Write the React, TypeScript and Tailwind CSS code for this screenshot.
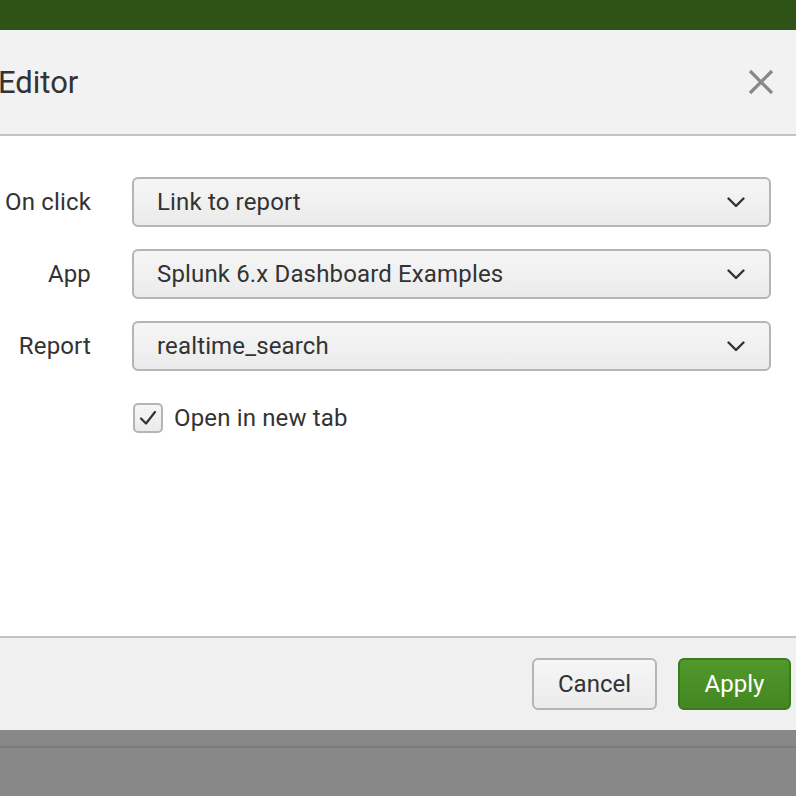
import React from 'react';

type Field = { label: string; value: string };

const fields: Field[] = [
  { label: 'On click', value: 'Link to report' },
  { label: 'App', value: 'Splunk 6.x Dashboard Examples' },
  { label: 'Report', value: 'realtime_search' },
];

function Chevron() {
  return (
    <svg width="18" height="11" viewBox="0 0 18 11" fill="none">
      <path d="M1.5 1.5 L9 9 L16.5 1.5" stroke="#333" strokeWidth="2.4" strokeLinecap="round" strokeLinejoin="round" />
    </svg>
  );
}

function SelectBox({ value }: { value: string }) {
  return (
    <div className="flex h-[50px] flex-1 items-center justify-between rounded-[6px] border-2 border-[#b5b5b5] bg-gradient-to-b from-[#f6f6f6] to-[#ebebeb] pl-[23px] pr-[24px]">
      <span className="text-[24px] tracking-[0.15px] text-[#333]">{value}</span>
      <Chevron />
    </div>
  );
}

export default function App() {
  return (
    <div className="flex h-[796px] w-[796px] flex-col overflow-hidden bg-[#888] font-['Roboto',sans-serif]">
      <div className="h-[30px] shrink-0 bg-[#2f5217]" />

      {/* header */}
      <div className="flex h-[106px] shrink-0 items-center justify-between border-b-2 border-[#c3c3c3] bg-[#f2f2f2] pr-[22px]">
        <h1 className="-ml-[2px] text-[31px] leading-none text-[#333]">Editor</h1>
        <svg width="26" height="26" viewBox="0 0 26 26">
          <path d="M2 2 L24 24 M24 2 L2 24" stroke="#888" strokeWidth="3.2" />
        </svg>
      </div>

      {/* body */}
      <div className="flex h-[502px] shrink-0 flex-col gap-[22px] border-b-2 border-[#c3c3c3] bg-white pr-[25px] pt-[41px]">
        {fields.map((f) => (
          <div key={f.label} className="flex items-center gap-[41px]">
            <label className="w-[91px] shrink-0 text-right text-[24px] tracking-[0.15px] text-[#333]">{f.label}</label>
            <SelectBox value={f.value} />
          </div>
        ))}
        <div className="flex items-center gap-[11px] pl-[133px] pt-[7px]">
          <div className="flex h-[30px] w-[30px] items-center justify-center rounded-[5px] border-2 border-[#b5b5b5] bg-gradient-to-b from-[#f6f6f6] to-[#ebebeb]">
            <svg width="18" height="16" viewBox="0 0 18 16" fill="none">
              <path d="M2 8.5 L7 13.5 L16 2" stroke="#333" strokeWidth="2.2" strokeLinecap="round" strokeLinejoin="round" />
            </svg>
          </div>
          <span className="text-[24px] tracking-[0.15px] text-[#333]">Open in new tab</span>
        </div>
      </div>

      {/* footer */}
      <div className="flex h-[92px] shrink-0 items-center justify-end gap-[21px] bg-[#f0f0f0] pr-[5px]">
        <button className="h-[52px] w-[125px] rounded-[6px] border-2 border-[#b5b5b5] bg-gradient-to-b from-[#f6f6f6] to-[#ebebeb] text-[24px] text-[#333]">
          Cancel
        </button>
        <button className="h-[52px] w-[113px] rounded-[6px] border-2 border-[#3c7a1f] bg-gradient-to-b from-[#51992b] to-[#438622] text-[24px] text-white">
          Apply
        </button>
      </div>

      <div className="mt-[16px] h-[2px] bg-[#7b7b7b]" />
    </div>
  );
}
